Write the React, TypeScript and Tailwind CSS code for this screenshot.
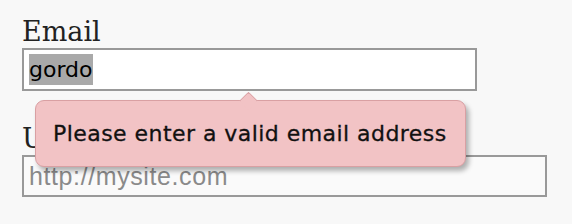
import React from "react";

export default function App() {
  return (
    <div className="relative h-[224px] w-[572px] overflow-hidden bg-[#f8f8f8]">
      <div className="flex flex-col pl-[22px] pt-[15px]">
        {/* Email field */}
        <label className="h-[33px] font-['DejaVu_Serif',serif] text-[27px] leading-[33px] text-[#222]">
          Email
        </label>
        <div className="flex h-[43px] w-[455px] items-center border-2 border-[#999] bg-white px-[5px]">
          <span className="bg-[#a9a9a9] font-['DejaVu_Sans',sans-serif] text-[22px] leading-[31px] text-black">
            gordo
          </span>
        </div>

        {/* URL field */}
        <label className="mt-[31px] h-[33px] font-['DejaVu_Serif',serif] text-[27px] leading-[33px] text-[#222]">
          URL
        </label>
        <div className="flex h-[42px] w-[525px] items-center border-2 border-[#999] bg-[#fafafa] px-[5px]">
          <span className="font-['Liberation_Sans',sans-serif] text-[25px] leading-[30px] tracking-[0.6px] text-[#8a8a8a]">
            http://mysite.com
          </span>
        </div>
      </div>

      {/* Validation tooltip */}
      <div className="absolute left-[35px] top-[100px] flex h-[67px] w-[431px] items-center rounded-[9px] border border-[#d9a0a3] bg-[#f2c3c5] pl-[17px] shadow-[3px_4px_5px_rgba(0,0,0,0.3)]">
        <div className="absolute -top-[7px] left-[206px] h-[13px] w-[13px] rotate-45 rounded-tl-[3px] border-l border-t border-[#d9a0a3] bg-[#f2c3c5]" />
        <span className="relative font-['DejaVu_Sans',sans-serif] text-[22px] tracking-[0.45px] text-[#111] [-webkit-text-stroke:0.3px_#111]">
          Please enter a valid email address
        </span>
      </div>
    </div>
  );
}
